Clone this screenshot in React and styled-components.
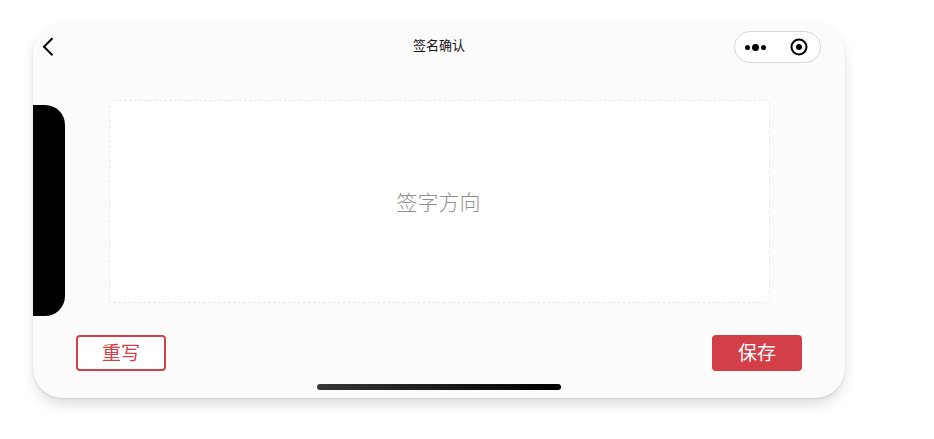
import React from "react";
import styled, { createGlobalStyle } from "styled-components";

const Global = createGlobalStyle`
  html, body { margin: 0; padding: 0; background: #fff; }
  body { font-family: "Noto Sans CJK SC", "Noto Sans", sans-serif; }
`;

const Page = styled.div`
  width: 934px;
  height: 439px;
  padding: 23px 0 0 33px;
  box-sizing: border-box;
  overflow: hidden;
`;

const Phone = styled.div`
  position: relative;
  width: 812px;
  height: 375px;
  box-sizing: border-box;
  background: #fbfbfb;
  border-radius: 30px;
  box-shadow: 0 8px 14px -2px rgba(0, 0, 0, 0.14), 0 1px 2px rgba(0, 0, 0, 0.1);
  display: flex;
  flex-direction: column;
  overflow: hidden;
`;

const Notch = styled.div`
  position: absolute;
  left: 0;
  top: 82px;
  width: 32px;
  height: 211px;
  background: #000;
  border-radius: 0 20px 20px 0;
`;

const NavBar = styled.header`
  height: 77px;
  flex: none;
  display: flex;
  align-items: flex-start;
  justify-content: space-between;
  padding: 8px 24px 0 9px;
  box-sizing: border-box;
`;

const BackButton = styled.div`
  width: 12px;
  height: 32px;
  display: flex;
  align-items: center;
`;

const Title = styled.div`
  position: absolute;
  left: 0;
  right: 0;
  top: 12px;
  text-align: center;
  font-size: 13px;
  line-height: 20px;
  font-weight: 400;
  color: #111;
`;

const Capsule = styled.div`
  width: 87px;
  height: 32px;
  box-sizing: border-box;
  border: 1px solid #d8d8d8;
  border-radius: 16px;
  background: #fff;
  display: flex;
  align-items: center;
  justify-content: space-between;
  padding: 0 12px 0 10px;
`;

const Dots = styled.div`
  display: flex;
  align-items: center;
  gap: 2px;
`;

const Dot = styled.span`
  display: block;
  width: ${(p) => p.$size}px;
  height: ${(p) => p.$size}px;
  border-radius: 50%;
  background: #000;
`;

const Content = styled.main`
  flex: 1;
  display: flex;
  flex-direction: column;
  align-items: center;
`;

const SignBox = styled.div`
  width: 661px;
  height: 203px;
  margin-left: 1px;
  padding: 0 2px 1px 0;
  box-sizing: border-box;
  background: #fff;
  border: 1px dashed #e8e8e8;
  border-radius: 5px;
  display: flex;
  align-items: center;
  justify-content: center;
  color: #8f8f8f;
  font-size: 21px;
  font-weight: 300;
`;

const Actions = styled.div`
  width: 100%;
  box-sizing: border-box;
  display: flex;
  justify-content: space-between;
  padding: 32px 43px 0;
`;

const ActionButton = styled.button`
  width: 90px;
  height: 36px;
  box-sizing: border-box;
  padding: 0 0 3px;
  border-radius: 4px;
  border: 2px solid #d23f47;
  background: ${(p) => (p.$primary ? "#d23f47" : "#fff")};
  color: ${(p) => (p.$primary ? "#fff" : "#d23f47")};
  font-family: inherit;
  font-size: 19px;
  font-weight: 400;
  line-height: 1;
`;

const HomeBar = styled.div`
  position: absolute;
  left: 284px;
  bottom: 8px;
  width: 244px;
  height: 6px;
  border-radius: 3px;
  background: linear-gradient(90deg, #363636, #000);
`;

export default function App() {
  return (
    <Page>
      <Global />
      <Phone>
        <Notch />
        <NavBar>
          <BackButton>
            <svg width="12" height="20" viewBox="0 0 12 20" fill="none">
              <path d="M10.5 1.2 L2 9.7 L10.5 18.2" stroke="#000" strokeWidth="2" />
            </svg>
          </BackButton>
          <Title>签名确认</Title>
          <Capsule>
            <Dots>
              <Dot $size={5} />
              <Dot $size={7} />
              <Dot $size={5} />
            </Dots>
            <svg width="18" height="18" viewBox="0 0 18 18">
              <circle cx="9" cy="9" r="7.5" fill="none" stroke="#000" strokeWidth="2" />
              <circle cx="9" cy="9" r="3" fill="#000" />
            </svg>
          </Capsule>
        </NavBar>
        <Content>
          <SignBox>签字方向</SignBox>
          <Actions>
            <ActionButton>重写</ActionButton>
            <ActionButton $primary>保存</ActionButton>
          </Actions>
        </Content>
        <HomeBar />
      </Phone>
    </Page>
  );
}
